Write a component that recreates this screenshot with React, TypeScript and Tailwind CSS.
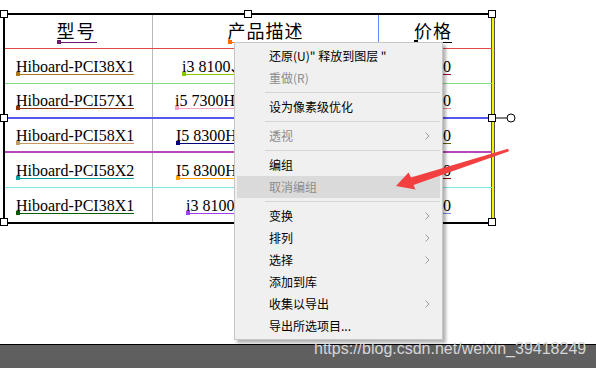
import React from 'react';

interface Row {
  model: string;
  mc: string;
  desc: string;
  dc: string;
  dpl: string;
  price: string;
  pc: string;
  line: string;
  h: string;
}

const rows: Row[] = [
  { model: 'Hiboard-PCI38X1', mc: '#a8761c', desc: 'i3 8100、8G、128G', dc: '#88c800', dpl: 'pl-[29px]', price: '1380', pc: '#a0003c', line: 'border-b border-[#7ee07e]', h: 'h-[35px]' },
  { model: 'Hiboard-PCI57X1', mc: '#8b3408', desc: 'i5 7300HQ、8G', dc: '#f4a2c2', dpl: 'pl-[22px]', price: '1680', pc: '#f08c8c', line: 'border-b-2 border-[#5656f0]', h: 'h-[35px]' },
  { model: 'Hiboard-PCI58X1', mc: '#c8986a', desc: 'I5 8300H、8G', dc: '#000080', dpl: 'pl-[23px]', price: '2280', pc: '#606000', line: 'border-b-2 border-[#b848b8]', h: 'h-[34px]' },
  { model: 'Hiboard-PCI58X2', mc: '#10a0a0', desc: 'I5 8300H、16G', dc: '#ffa000', dpl: 'pl-[23px]', price: '2480', pc: '#800000', line: 'border-b border-[#80e6e6]', h: 'h-[35px]' },
  { model: 'Hiboard-PCI38X1', mc: '#0a5a0a', desc: 'i3 8100-4G', dc: '#a040f0', dpl: 'pl-[33px]', price: '1280', pc: '#8080f0', line: '', h: 'h-[34px]' },
];

const Tag: React.FC<{ color: string; className?: string; children: React.ReactNode }> = ({ color, className, children }) => (
  <span className={`relative inline-block whitespace-nowrap ${className ?? ''}`} style={{ borderBottom: `1px solid ${color}` }}>
    {children}
    <span className="absolute left-0 bottom-[-2px] w-[4px] h-[4px]" style={{ background: color }} />
  </span>
);

const Handle: React.FC<{ x: number; y: number }> = ({ x, y }) => (
  <div
    className="absolute w-[8px] h-[8px] bg-white border border-black"
    style={{ left: x - 4, top: y - 4 }}
  />
);

const Chevron = () => (
  <svg width="5" height="8" viewBox="0 0 5 8" className="text-[#9a9a9a]">
    <path d="M0.5 0.5 L4 4 L0.5 7.5" fill="none" stroke="currentColor" strokeWidth="1" />
  </svg>
);

type Item = { label: string; disabled?: boolean; sub?: boolean; active?: boolean } | 'sep';

const menu: Item[] = [
  { label: '还原(U)" 释放到图层 "' },
  { label: '重做(R)', disabled: true },
  'sep',
  { label: '设为像素级优化' },
  'sep',
  { label: '透视', disabled: true, sub: true },
  'sep',
  { label: '编组' },
  { label: '取消编组', disabled: true, active: true },
  'sep',
  { label: '变换', sub: true },
  { label: '排列', sub: true },
  { label: '选择', sub: true },
  { label: '添加到库' },
  { label: '收集以导出', sub: true },
  { label: '导出所选项目...' },
];

const serif = { fontFamily: '"Liberation Serif", "Noto Sans CJK SC", serif' };

export default function App() {
  return (
    <div className="w-[596px] h-[368px] bg-white overflow-hidden flex flex-col">
      {/* canvas */}
      <div className="relative h-[344px] shrink-0">
        <div className="ml-[3px] mt-[13px] flex w-max" style={serif}>
          <div className="border-l-2 border-t-2 border-b-2 border-black text-black">
            {/* header */}
            <div className="flex h-[34px] border-b border-[#e04848]">
              <div className="w-[148px] border-r border-[#b8b8b8] flex items-center justify-center pt-[2px] pr-[4px]">
                <Tag color="#6a1a6a" className="text-[18px] leading-[19px] tracking-[2px]">型号</Tag>
              </div>
              <div className="w-[226px] border-r border-[#6a86ff] flex items-center justify-center pt-[2px]">
                <Tag color="#ff6a00" className="text-[18px] leading-[19px] tracking-[1px]">产品描述</Tag>
              </div>
              <div className="w-[113px] border-r border-[#555] flex items-center justify-center pt-[2px] pr-[4px]">
                <Tag color="#000000" className="text-[18px] leading-[19px] tracking-[1px]">价格</Tag>
              </div>
            </div>
            {rows.map((r, i) => (
              <div key={i} className={`flex ${r.h} ${r.line} text-[16px]`}>
                <div className="w-[148px] border-r border-[#b8b8b8] flex items-center pl-[11px] pt-[1px]">
                  <Tag color={r.mc} className="leading-[15px]">{r.model}</Tag>
                </div>
                <div className={`w-[226px] border-r border-[#6a86ff] flex items-center overflow-hidden pt-[1px] ${r.dpl}`}>
                  <Tag color={r.dc} className="leading-[15px]">{r.desc}</Tag>
                </div>
                <div className="w-[113px] border-r border-[#555] flex items-center justify-end pr-[40px] pt-[1px]">
                  <Tag color={r.pc} className="leading-[15px]">{r.price}</Tag>
                </div>
              </div>
            ))}
          </div>
          <div className="w-[2px] bg-[#f2f200] border-t-2 border-b-2 border-black" />
          <div className="w-[1px] bg-[#555]" />
        </div>

        {/* selection handles */}
        <Handle x={4} y={14} />
        <Handle x={248} y={14} />
        <Handle x={492} y={14} />
        <Handle x={4} y={118} />
        <Handle x={492} y={118} />
        <Handle x={4} y={222} />
        <Handle x={492} y={222} />
        <svg className="absolute left-[496px] top-[112px]" width="22" height="12" viewBox="0 0 22 12">
          <line x1="0" y1="6" x2="11" y2="6" stroke="#000" strokeWidth="1" />
          <circle cx="15" cy="6" r="4" fill="#fff" stroke="#000" strokeWidth="1" />
        </svg>

        {/* context menu */}
        <div
          className="absolute left-[234px] top-[42px] w-[209px] bg-[#f0f0f0] border border-[#c6c6c6] py-[2px] shadow-[3px_3px_3px_rgba(0,0,0,0.3)] text-[12px]"
          style={{ fontFamily: '"Noto Sans CJK SC", "Liberation Sans", sans-serif' }}
        >
          {menu.map((m, i) =>
            m === 'sep' ? (
              <div key={i} className="h-[7px] flex items-center pl-[30px] pr-[2px]">
                <div className="h-px w-full bg-[#d4d4d4]" />
              </div>
            ) : (
              <div
                key={i}
                className={`h-[22px] mx-[2px] flex items-center justify-between pl-[32px] pr-[10px] leading-none ${
                  m.active ? 'bg-[#dadada]' : ''
                } ${m.disabled ? 'text-[#8c8c8c]' : 'text-black'}`}
              >
                <span>{m.label}</span>
                {m.sub && <Chevron />}
              </div>
            )
          )}
        </div>

        {/* red arrow: tip (396,186), tail (508,150) */}
        <svg className="absolute left-0 top-0 z-20 pointer-events-none" width="596" height="344">
          <polygon
            points="396,186 408.5,172.5 411,177.5 508,148.8 509,151.2 413.5,185 415.5,189.5"
            fill="#f24040"
          />
        </svg>
      </div>

      {/* status bar */}
      <div className="relative flex-1 bg-[#5f5f5f] border-t border-black">
        <span
          className="absolute left-[314px] top-[-5px] text-[16px] leading-[18px] text-[#d6d6d6] whitespace-nowrap"
          style={{ fontFamily: '"Liberation Sans", Arial, sans-serif' }}
        >
          https://blog.csdn.net/weixin_39418249
        </span>
      </div>
    </div>
  );
}
